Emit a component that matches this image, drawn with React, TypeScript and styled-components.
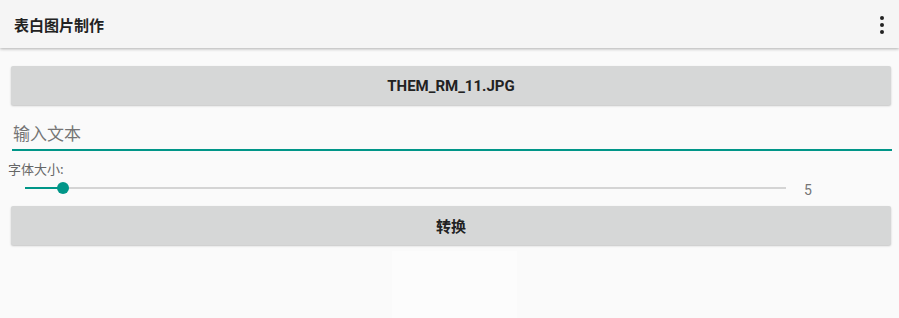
import React, {useState} from 'react';
import styled, {createGlobalStyle} from 'styled-components';

const GlobalStyle = createGlobalStyle`
  html, body {
    margin: 0;
    padding: 0;
    background: #fafafa;
    font-family: Roboto, "Noto Sans CJK SC", sans-serif;
  }
`;

const MoreIcon = () => (
  <svg width={4} height={18} viewBox="0 0 4 18">
    <circle cx={2} cy={2} r={2} fill="#222" />
    <circle cx={2} cy={9} r={2} fill="#222" />
    <circle cx={2} cy={16} r={2} fill="#222" />
  </svg>
);

export default function App() {
  const [size] = useState(5);
  const percent = 5;
  return (
    <Page>
      <GlobalStyle />
      <AppBar>
        <Title>表白图片制作</Title>
        <MenuButton>
          <MoreIcon />
        </MenuButton>
      </AppBar>
      <Content>
        <Button>THEM_RM_11.JPG</Button>
        <InputField placeholder="输入文本" />
        <Label>字体大小:</Label>
        <SliderRow>
          <Track>
            <Filled style={{width: `${percent}%`}} />
            <Thumb style={{left: `${percent}%`}} />
          </Track>
          <Value>{size}</Value>
        </SliderRow>
        <Button>转换</Button>
        <Preview />
      </Content>
    </Page>
  );
}

const Page = styled.div`
  width: 899px;
  height: 318px;
  overflow: hidden;
  background: #fafafa;
`;

const AppBar = styled.div`
  display: flex;
  align-items: center;
  justify-content: space-between;
  height: 48px;
  padding: 0 15px 0 14px;
  background: #f5f5f5;
  box-shadow: 0 1px 3px rgba(0, 0, 0, 0.3);
  position: relative;
  z-index: 1;
`;

const Title = styled.span`
  font-family: "Noto Sans CJK SC", sans-serif;
  font-weight: bold;
  font-size: 15px;
  color: #222;
`;

const MenuButton = styled.div`
  display: flex;
  align-items: center;
  padding-top: 1px;
`;

const Content = styled.div`
  display: flex;
  flex-direction: column;
  padding: 18px 8px 0 11px;
`;

const Button = styled.div`
  display: flex;
  align-items: center;
  justify-content: center;
  width: 880px;
  height: 39px;
  background: #d6d7d7;
  border-radius: 2px;
  box-shadow: 0 1px 2px rgba(0, 0, 0, 0.22);
  font-family: Roboto, "Noto Sans CJK SC", sans-serif;
  font-weight: bold;
  font-size: 15px;
  color: #222;
`;

const InputField = styled.input`
  width: 878px;
  margin: 10px 0 0 1px;
  padding: 6px 1px 4px;
  border: none;
  border-bottom: 2px solid #009688;
  background: transparent;
  outline: none;
  font-family: "Noto Sans CJK SC", sans-serif;
  font-size: 17px;
  line-height: 24px;
  color: #333;
  &::placeholder {
    color: #757575;
  }
`;

const Label = styled.div`
  margin: 10px 0 0 -3px;
  font-family: "Noto Sans CJK SC", sans-serif;
  font-size: 13px;
  line-height: 16px;
  color: #666;
`;

const SliderRow = styled.div`
  display: flex;
  align-items: center;
  height: 20px;
  margin: 1px 0 8px 14px;
`;

const Track = styled.div`
  position: relative;
  width: 761px;
  height: 2px;
  background: #d4d4d4;
`;

const Filled = styled.div`
  height: 2px;
  background: #009688;
`;

const Thumb = styled.div`
  position: absolute;
  top: -5px;
  width: 12px;
  height: 12px;
  margin-left: -6px;
  border-radius: 50%;
  background: #009688;
`;

const Value = styled.span`
  margin: 3px 0 0 18px;
  font-family: Roboto, sans-serif;
  font-size: 14px;
  color: #757575;
`;

const Preview = styled.div`
  width: 125px;
  height: 70px;
  margin: 6px 0 0 381px;
  background: #fcfcfc;
`;
